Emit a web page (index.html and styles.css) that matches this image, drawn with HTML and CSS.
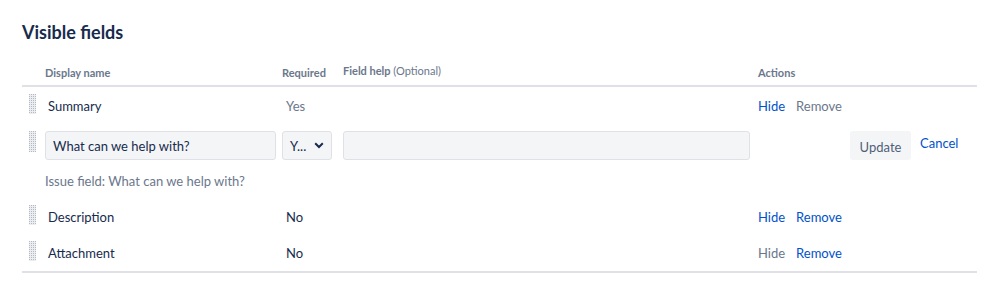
FILE: index.html
```html
<!DOCTYPE html>
<html>
<head>
<meta charset="utf-8">
<link rel="stylesheet" href="styles.css">
</head>
<body>
<div class="page">
  <h2 class="title">Visible fields</h2>
  <div class="table">
    <div class="row head">
      <div class="c-handle"></div>
      <div class="c-name">Display name</div>
      <div class="c-req">Required</div>
      <div class="c-help">Field help <span class="opt">(Optional)</span></div>
      <div class="c-act">Actions</div>
    </div>
    <div class="row item first">
      <div class="c-handle"><span class="handle"></span></div>
      <div class="c-name name">Summary</div>
      <div class="c-req muted">Yes</div>
      <div class="c-help"></div>
      <div class="c-act"><a class="link">Hide</a><span class="muted-link">Remove</span></div>
    </div>
    <div class="row edit">
      <div class="c-handle"><span class="handle tall"></span></div>
      <div class="c-name"><div class="input text-input">What can we help with?</div></div>
      <div class="c-req"><div class="input select">Y... <svg class="chev" width="10" height="7" viewBox="0 0 10 7"><path d="M1.2 1.3 L5 5 L8.8 1.3" fill="none" stroke="#172B4D" stroke-width="2"/></svg></div></div>
      <div class="c-help"><div class="input help-input"></div></div>
      <div class="c-act edit-act"><span class="btn">Update</span><a class="link cancel">Cancel</a></div>
    </div>
    <div class="row note">
      <div class="c-handle"></div>
      <div class="c-name muted">Issue field: What can we help with?</div>
    </div>
    <div class="row item">
      <div class="c-handle"><span class="handle"></span></div>
      <div class="c-name name">Description</div>
      <div class="c-req">No</div>
      <div class="c-help"></div>
      <div class="c-act"><a class="link">Hide</a><a class="link">Remove</a></div>
    </div>
    <div class="row item last">
      <div class="c-handle"><span class="handle"></span></div>
      <div class="c-name name">Attachment</div>
      <div class="c-req">No</div>
      <div class="c-help"></div>
      <div class="c-act"><span class="muted-link">Hide</span><a class="link">Remove</a></div>
    </div>
  </div>
</div>
</body>
</html>
```

FILE: styles.css
```css
html, body {
  margin: 0;
  padding: 0;
  background: #fff;
}
body {
  font-family: Lato, "Liberation Sans", sans-serif;
  color: #172B4D;
  font-size: 13px;
}
.page {
  padding: 20px 22px 0 22px;
}
.title {
  margin: 0;
  font-size: 18px;
  font-weight: 700;
  line-height: 24px;
  color: #172B4D;
}
.table {
  margin-top: 11px;
  width: 955px;
}
.row {
  display: grid;
  grid-template-columns: 22px 238px 61px 415px 1fr;
  align-items: center;
}
.head {
  font-size: 11px;
  font-weight: 700;
  color: #6B778C;
  height: 30px;
  border-bottom: 2px solid #DFE1E6;
  align-items: start;
}
.head > div { padding-top: 11px; }
.head .c-help { padding-top: 9px; }
.head .opt { font-weight: 400; }
.c-name { padding-left: 1px; }
.item {
  height: 37px;
}
.item.first { height: 38px; }
.item .name { padding-left: 4px; }
.item .c-req { padding-left: 4px; }
.handle {
  display: block;
  margin-left: 7px;
  width: 7px;
  height: 20px;
  background-color: #B3BAC5;
  background-image:
    linear-gradient(to right, transparent 1px, #ECEDF0 1px),
    linear-gradient(to bottom, transparent 1px, #ECEDF0 1px);
  background-size: 2px 2px, 2px 2px;
}
.item .handle { margin-top: -4px; }
.muted { color: #6B778C; }
.link {
  color: #0052CC;
  margin-right: 11px;
  cursor: pointer;
}
.muted-link {
  color: #6B778C;
  margin-right: 11px;
}
.c-act { display: flex; }
.edit {
  height: 29px;
  margin-top: 6px;
  align-items: start;
}
.handle.tall { height: 21px; }
.input {
  box-sizing: border-box;
  height: 29px;
  background: #F4F5F7;
  border: 1px solid #DFE1E6;
  border-radius: 3px;
  display: flex;
  align-items: center;
}
.text-input {
  width: 231px;
  padding-left: 7px;
  color: #172B4D;
}
.select {
  width: 50px;
  padding-left: 7px;
  padding-right: 7px;
  color: #172B4D;
  justify-content: space-between;
}
.chev { display: block; }
.help-input {
  width: 407px;
}
.edit-act {
  align-items: flex-start;
}
.btn {
  margin-left: 92px;
  box-sizing: border-box;
  height: 29px;
  width: 61px;
  padding-top: 2px;
  background: #F4F5F7;
  border-radius: 3px;
  color: #505F79;
  display: flex;
  align-items: center;
  justify-content: center;
}
.cancel {
  margin-left: 9px;
  margin-top: 4px;
}
.note {
  height: 34px;
  padding-top: 4px;
}
.last {
  height: 36px;
  border-bottom: 2px solid #DFE1E6;
}
```
